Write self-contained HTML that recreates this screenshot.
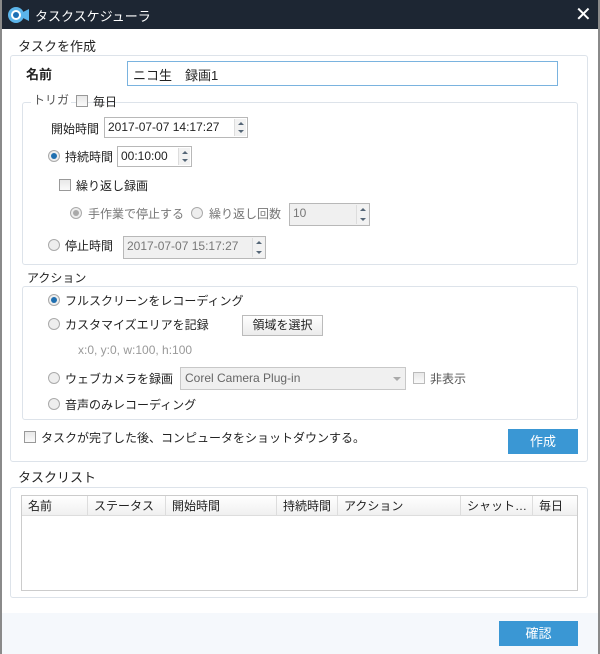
<!DOCTYPE html>
<html><head><meta charset="utf-8"><style>
*{box-sizing:border-box;margin:0;padding:0}
body{width:600px;height:654px;overflow:hidden;background:#fff;font-family:"Liberation Sans","Noto Sans CJK JP",sans-serif;font-size:12px;color:#222;position:relative}
.a{position:absolute;white-space:nowrap}
.win{position:absolute;left:0;top:0;width:600px;height:654px;border:2px solid #8a8a8a;border-top:none}
.title{position:absolute;left:0;top:0;width:600px;height:29px;background:#1d2633;color:#fff;font-size:13px}
.grp{position:absolute;border:1px solid #dde3ea;border-radius:3px}
.lbl{position:absolute;background:#fff;padding:0 2px;line-height:14px}
.cb{position:absolute;width:12px;height:12px;border:1px solid #999;background:linear-gradient(#e8e8e8,#fafafa)}
.rb{position:absolute;width:12px;height:12px;border-radius:50%;border:1px solid #aaa;background:#eee}
.rb.on::after{content:"";position:absolute;left:2px;top:2px;width:6px;height:6px;border-radius:50%;background:#1f6fb0}
.rb.dis.on::after{background:#aaa}
.spin{position:absolute;border:1px solid #b8b8b8;background:#fff;padding-left:3px;line-height:18px}
.spin.dis{background:#f0f0f0;color:#777}
.spin .ar{position:absolute;right:1px;top:1px;width:12px;bottom:1px;border-left:1px solid #ddd;background:#f2f2f2}
.spin .ar::before,.spin .ar::after{content:"";position:absolute;left:3px;border-left:3px solid transparent;border-right:3px solid transparent}
.spin .ar::before{top:3px;border-bottom:3px solid #567}
.spin .ar::after{bottom:3px;border-top:3px solid #567}
.btn{position:absolute;background:#3a97d4;color:#fff;text-align:center;font-size:13px}
.th{position:absolute;top:0;height:20px;line-height:20px;border-right:1px solid #ddd;padding-left:6px}
</style></head><body>
<div class="title">
<svg class="a" style="left:8px;top:6px" width="22" height="18" viewBox="0 0 22 18"><circle cx="8" cy="9" r="8" fill="#5bb4ea"/><circle cx="8" cy="9" r="5" fill="#fff"/><circle cx="8" cy="9" r="3" fill="#1c6fb5"/><path d="M15 6l6-3v12l-6-3z" fill="#5bb4ea"/></svg>
<div class="a" style="left:35px;top:6px">タスクスケジューラ</div>
<div class="a" style="left:575px;top:2px;font-size:20px">✕</div>
</div>
<div class="win"></div>

<div class="grp" style="left:10px;top:55px;width:578px;height:407px"></div>
<div class="lbl" style="left:16px;top:40px;font-size:13px">タスクを作成</div>
<div class="a" style="left:26px;top:64px;font-weight:bold;font-size:13px">名前</div>
<div class="a" style="left:127px;top:61px;width:431px;height:25px;border:1px solid #7ab3df;padding:3px 5px;font-size:13px">ニコ生　録画1</div>

<div class="grp" style="left:22px;top:102px;width:556px;height:163px"></div>
<div class="lbl" style="left:31px;top:93px;color:#555">トリガ</div>
<div class="cb" style="left:76px;top:95px"></div>
<div class="a" style="left:93px;top:93px">毎日</div>

<div class="a" style="left:51px;top:120px">開始時間</div>
<div class="spin" style="left:104px;top:117px;width:144px;height:21px">2017-07-07 14:17:27<div class="ar"></div></div>
<div class="rb on" style="left:48px;top:150px"></div>
<div class="a" style="left:65px;top:148px">持続時間</div>
<div class="spin" style="left:117px;top:146px;width:75px;height:21px">00:10:00<div class="ar"></div></div>
<div class="cb" style="left:59px;top:179px"></div>
<div class="a" style="left:76px;top:177px">繰り返し録画</div>
<div class="rb dis on" style="left:70px;top:207px"></div>
<div class="a" style="left:88px;top:205px;color:#777">手作業で停止する</div>
<div class="rb dis" style="left:191px;top:207px"></div>
<div class="a" style="left:209px;top:205px;color:#777">繰り返し回数</div>
<div class="spin dis" style="left:289px;top:203px;width:81px;height:23px">10<div class="ar"></div></div>
<div class="rb" style="left:48px;top:239px"></div>
<div class="a" style="left:65px;top:237px">停止時間</div>
<div class="spin dis" style="left:123px;top:236px;width:143px;height:23px">2017-07-07 15:17:27<div class="ar"></div></div>

<div class="grp" style="left:22px;top:286px;width:556px;height:134px"></div>
<div class="lbl" style="left:25px;top:271px">アクション</div>
<div class="rb on" style="left:48px;top:294px"></div>
<div class="a" style="left:65px;top:292px">フルスクリーンをレコーディング</div>
<div class="rb" style="left:48px;top:318px"></div>
<div class="a" style="left:65px;top:316px">カスタマイズエリアを記録</div>
<div class="a" style="left:242px;top:315px;width:81px;height:21px;border:1px solid #bbb;background:linear-gradient(#fff,#ececec);text-align:center;line-height:19px">領域を選択</div>
<div class="a" style="left:78px;top:343px;color:#999">x:0, y:0, w:100, h:100</div>
<div class="rb" style="left:48px;top:372px"></div>
<div class="a" style="left:65px;top:370px">ウェブカメラを録画</div>
<div class="a" style="left:180px;top:367px;width:226px;height:23px;border:1px solid #c8c8c8;background:#f0f0f0;color:#666;padding-left:4px;line-height:21px">Corel Camera Plug-in<span style="position:absolute;right:4px;top:9px;border-left:4px solid transparent;border-right:4px solid transparent;border-top:4px solid #aaa"></span></div>
<div class="cb" style="left:413px;top:372px;border-color:#bbb"></div>
<div class="a" style="left:430px;top:370px;color:#555">非表示</div>
<div class="rb" style="left:48px;top:398px"></div>
<div class="a" style="left:65px;top:396px">音声のみレコーディング</div>

<div class="cb" style="left:24px;top:431px"></div>
<div class="a" style="left:41px;top:429px">タスクが完了した後、コンピュータをショットダウンする。</div>
<div class="btn" style="left:508px;top:429px;width:70px;height:25px;line-height:25px">作成</div>

<div class="grp" style="left:10px;top:487px;width:578px;height:111px"></div>
<div class="lbl" style="left:16px;top:471px;font-size:13px">タスクリスト</div>
<div class="a" style="left:21px;top:495px;width:557px;height:96px;border:1px solid #ccc">
<div class="a" style="left:0;top:0;width:555px;height:20px;background:linear-gradient(#fff,#f0f0f0);border-bottom:1px solid #ddd"></div>
<div class="th" style="left:0;width:66px">名前</div>
<div class="th" style="left:66px;width:78px">ステータス</div>
<div class="th" style="left:144px;width:111px">開始時間</div>
<div class="th" style="left:255px;width:61px">持続時間</div>
<div class="th" style="left:316px;width:123px">アクション</div>
<div class="th" style="left:439px;width:72px">シャット…</div>
<div class="th" style="left:511px;width:44px;border:none">毎日</div>
</div>

<div class="a" style="left:2px;top:613px;width:596px;height:41px;background:#f5f8fc"></div>
<div class="btn" style="left:499px;top:621px;width:79px;height:25px;line-height:25px">確認</div>
</body></html>
